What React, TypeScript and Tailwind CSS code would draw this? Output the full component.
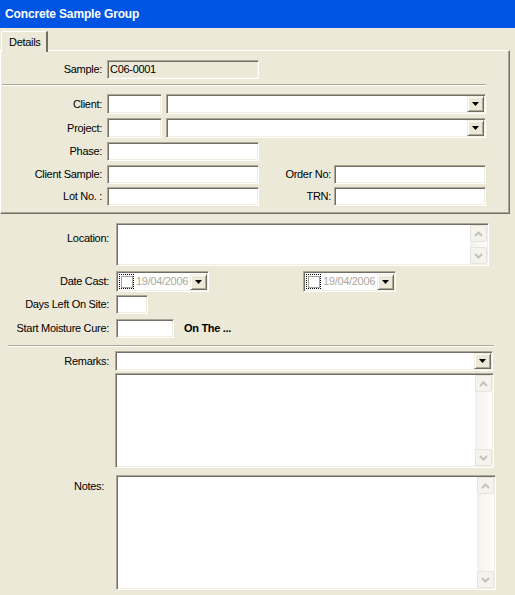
import React from "react";

const sunken =
  "border border-t-[#aca899] border-l-[#aca899] border-b-white border-r-white shadow-[inset_1px_1px_0_#716f64,inset_-1px_-1px_0_#f1efe2]";

function Arrow() {
  return (
    <svg width="7" height="4" viewBox="0 0 7 4">
      <path d="M0 0h7L3.5 4z" fill="#000" />
    </svg>
  );
}

function DropButton() {
  return (
    <div className="w-[17px] h-[16px] shrink-0 flex items-center justify-center bg-[#ece9d8] border border-t-[#f1efe2] border-l-[#f1efe2] border-b-[#716f64] border-r-[#716f64] shadow-[inset_1px_1px_0_#ffffff,inset_-1px_-1px_0_#aca899]">
      <Arrow />
    </div>
  );
}

function Chevron({ up }: { up?: boolean }) {
  return (
    <svg width="9" height="6" viewBox="0 0 9 6">
      <path
        d={up ? "M1 5L4.5 1.5L8 5" : "M1 1L4.5 4.5L8 1"}
        fill="none"
        stroke="#c3c2ba"
        strokeWidth="2"
      />
    </svg>
  );
}

function ScrollBar() {
  return (
    <div className="w-[17px] h-full flex flex-col justify-between bg-gradient-to-r from-[#f3f1ec] to-[#fdfdfb]">
      <div className="h-[17px] rounded-[2px] border border-[#e6e4dc] bg-[#f4f3ee] flex items-center justify-center">
        <Chevron up />
      </div>
      <div className="h-[17px] rounded-[2px] border border-[#e6e4dc] bg-[#f4f3ee] flex items-center justify-center">
        <Chevron />
      </div>
    </div>
  );
}

function Combo({ className }: { className: string }) {
  return (
    <div className={`${sunken} bg-white flex items-center justify-end pr-[1px] ${className}`}>
      <DropButton />
    </div>
  );
}

function Memo({ className }: { className: string }) {
  return (
    <div className={`${sunken} bg-white flex justify-end p-[1px] ${className}`}>
      <ScrollBar />
    </div>
  );
}

function DateBox() {
  return (
    <div className={`${sunken} bg-white h-[21px] w-[93px] flex items-center pl-[2px] pr-[1px]`}>
      <div className="w-[15px] h-[15px] border border-dotted border-black flex items-center justify-center">
        <div className="w-[12px] h-[12px] border border-[#a5a49c] bg-white" />
      </div>
      <span className="ml-[2px] flex-1 text-[#aca899]">19/04/2006</span>
      <DropButton />
    </div>
  );
}

function Groove({ className }: { className: string }) {
  return <div className={`h-[2px] border-t border-t-[#aca899] border-b border-b-white ${className}`} />;
}

export default function App() {
  return (
    <div className="w-[515px] h-[595px] overflow-hidden bg-[#ece9d8] text-black text-[11px] leading-[13px] tracking-[-0.3px] font-['Liberation_Sans',Arial,sans-serif]">
      <div className="h-[28px] bg-[#0054e3] flex items-center pl-[5px] text-white font-bold text-[12px] tracking-[-0.15px]">
        Concrete Sample Group
      </div>

      {/* tab strip */}
      <div className="h-[23px] pt-[3px] pl-[1px] flex">
        <div className="w-[47px] h-[21px] bg-[#ece9d8] border-t border-l border-t-white border-l-white border-r-2 border-r-[#716f64] rounded-tl-[2px] flex items-center pl-[7px] relative z-10">
          Details
        </div>
      </div>

      {/* tab panel */}
      <div className="w-[510px] h-[164px] -mt-[1px] border border-t-white border-l-white border-r-[#716f64] border-b-[#716f64] shadow-[inset_-1px_-1px_0_#aca899]">
        <div className="mt-[9px] flex items-center h-[19px]">
          <span className="w-[101px] text-right">Sample:</span>
          <div className={`${sunken} ml-[5px] w-[152px] h-[19px] bg-[#ece9d8] flex items-center pl-[2px]`}>C06-0001</div>
        </div>

        <Groove className="mt-[5px] ml-[1px] w-[484px]" />

        <div className="mt-[8px] flex flex-col gap-[4px]">
          <div className="flex items-center h-[20px]">
            <span className="w-[101px] text-right">Client:</span>
            <div className={`${sunken} ml-[5px] w-[55px] h-[20px] bg-white`} />
            <Combo className="ml-[4px] w-[320px] h-[20px]" />
          </div>
          <div className="flex items-center h-[20px]">
            <span className="w-[101px] text-right">Project:</span>
            <div className={`${sunken} ml-[5px] w-[55px] h-[20px] bg-white`} />
            <Combo className="ml-[4px] w-[320px] h-[20px]" />
          </div>
          <div className="flex items-center h-[19px]">
            <span className="w-[101px] text-right">Phase:</span>
            <div className={`${sunken} ml-[5px] w-[152px] h-[19px] bg-white`} />
          </div>
          <div className="flex items-center h-[19px]">
            <span className="w-[101px] text-right">Client Sample:</span>
            <div className={`${sunken} ml-[5px] w-[152px] h-[19px] bg-white`} />
            <span className="w-[72px] text-right">Order No:</span>
            <div className={`${sunken} ml-[3px] w-[152px] h-[19px] bg-white`} />
          </div>
          <div className="flex items-center h-[19px] -mt-[1px]">
            <span className="w-[101px] text-right">Lot No. :</span>
            <div className={`${sunken} ml-[5px] w-[152px] h-[19px] bg-white`} />
            <span className="w-[72px] text-right">TRN:</span>
            <div className={`${sunken} ml-[3px] w-[152px] h-[19px] bg-white`} />
          </div>
        </div>
      </div>

      {/* lower section */}
      <div className="mt-[9px] flex">
        <span className="w-[109px] text-right pt-[9px]">Location:</span>
        <Memo className="ml-[7px] w-[373px] h-[43px]" />
      </div>

      <div className="mt-[5px] flex items-center h-[21px]">
        <span className="w-[109px] text-right">Date Cast:</span>
        <div className="ml-[7px]">
          <DateBox />
        </div>
        <div className="ml-[94px]">
          <DateBox />
        </div>
      </div>

      <div className="mt-[3px] flex items-center h-[19px]">
        <span className="w-[109px] text-right">Days Left On Site:</span>
        <div className={`${sunken} ml-[7px] w-[32px] h-[19px] bg-white`} />
      </div>

      <div className="mt-[5px] flex items-center h-[19px]">
        <span className="w-[109px] text-right">Start Moisture Cure:</span>
        <div className={`${sunken} ml-[7px] w-[58px] h-[19px] bg-white`} />
        <span className="ml-[10px] font-bold">On The ...</span>
      </div>

      <Groove className="mt-[7px] ml-[8px] w-[486px]" />

      <div className="mt-[4px] flex items-center h-[20px]">
        <span className="w-[109px] text-right">Remarks:</span>
        <Combo className="ml-[6px] w-[378px] h-[20px]" />
      </div>

      <div className="mt-[2px] flex">
        <Memo className="ml-[115px] w-[379px] h-[95px]" />
      </div>

      <div className="mt-[7px] flex">
        <span className="w-[104px] text-right pt-[5px]">Notes:</span>
        <Memo className="ml-[12px] w-[380px] h-[115px]" />
      </div>
    </div>
  );
}
